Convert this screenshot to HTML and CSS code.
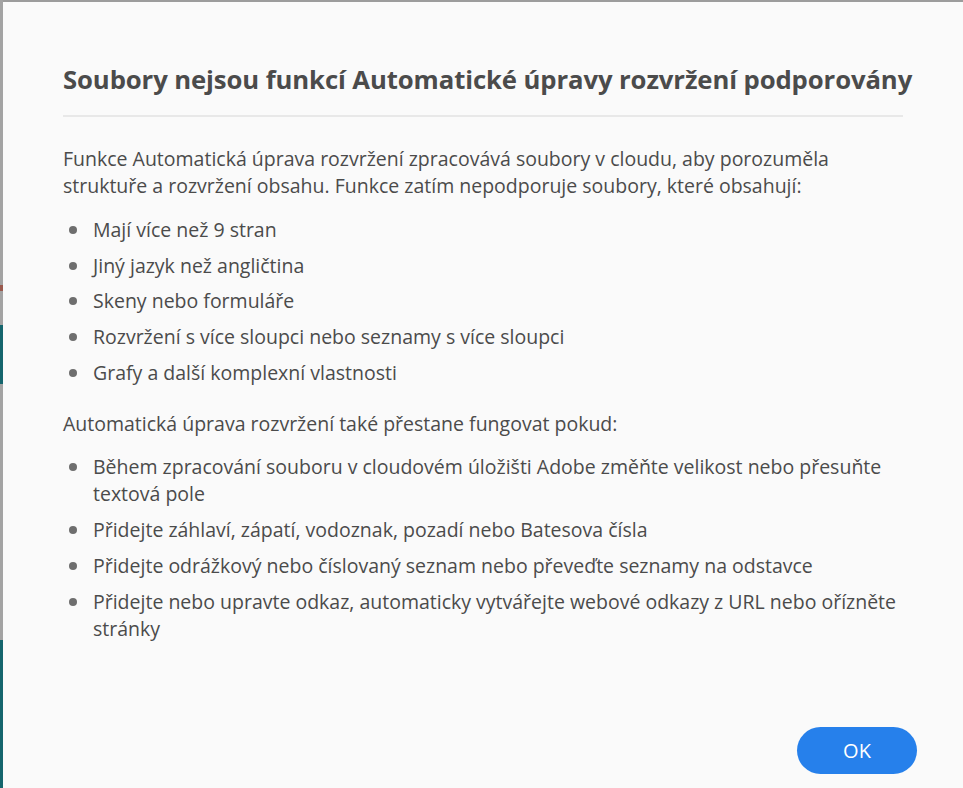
FILE: index.html
```html
<!DOCTYPE html>
<html lang="cs">
<head>
<meta charset="utf-8">
<title>Soubory nejsou podporovány</title>
<link rel="stylesheet" href="styles.css">
</head>
<body>
<div class="page">
  <div class="backdrop-strip">
    <div class="seg seg-gray seg-a"></div>
    <div class="seg seg-red"></div>
    <div class="seg seg-gray seg-b"></div>
    <div class="seg seg-teal seg-c"></div>
    <div class="seg seg-gray seg-d"></div>
    <div class="seg seg-teal seg-e"></div>
  </div>
  <div class="dialog">
    <h1 class="title">Soubory nejsou funkcí Automatické úpravy rozvržení podporovány</h1>
    <div class="divider"></div>
    <p class="para">Funkce Automatická úprava rozvržení zpracovává soubory v cloudu, aby porozuměla struktuře a rozvržení obsahu. Funkce zatím nepodporuje soubory, které obsahují:</p>
    <ul class="list">
      <li>Mají více než 9 stran</li>
      <li>Jiný jazyk než angličtina</li>
      <li>Skeny nebo formuláře</li>
      <li>Rozvržení s více sloupci nebo seznamy s více sloupci</li>
      <li>Grafy a další komplexní vlastnosti</li>
    </ul>
    <p class="para para-second">Automatická úprava rozvržení také přestane fungovat pokud:</p>
    <ul class="list list-second">
      <li>Během zpracování souboru v cloudovém úložišti Adobe změňte velikost nebo přesuňte textová pole</li>
      <li>Přidejte záhlaví, zápatí, vodoznak, pozadí nebo Batesova čísla</li>
      <li>Přidejte odrážkový nebo číslovaný seznam nebo převeďte seznamy na odstavce</li>
      <li>Přidejte nebo upravte odkaz, automaticky vytvářejte webové odkazy z URL nebo ořízněte stránky</li>
    </ul>
    <div class="footer">
      <button class="ok-btn" type="button">OK</button>
    </div>
  </div>
</div>
</body>
</html>
```
FILE: styles.css
```css
html, body {
  margin: 0;
  padding: 0;
  height: 100%;
}
body {
  background: #9c9c9c;
  font-family: "Open Sans", "Noto Sans", sans-serif;
  overflow: hidden;
}
.page {
  display: flex;
  height: 788px;
}
.backdrop-strip {
  width: 3px;
  display: flex;
  flex-direction: column;
  flex: none;
}
.seg { width: 100%; }
.seg-gray { background: #a3a3a3; }
.seg-a { height: 285px; }
.seg-red { height: 6px; background: #9a5a4e; }
.seg-b { height: 34px; }
.seg-c { height: 59px; }
.seg-d { height: 256px; }
.seg-teal { background: #15656d; }
.seg-e { flex: 1; }
.dialog {
  flex: 1;
  min-width: 0;
  margin-top: 2px;
  background: #fafafa;
  padding: 0 60px 0 60px;
  display: flex;
  flex-direction: column;
  color: #4b4b4b;
}
.title {
  margin: 62px 0 0 0;
  font-size: 25.7px;
  font-weight: 700;
  line-height: 32px;
  color: #4b4b4b;
  letter-spacing: -0.1px;
  white-space: nowrap;
}
.divider {
  margin-top: 19px;
  height: 2px;
  width: 840px;
  background: #e8e8e8;
}
.para {
  margin: 28px 0 0 0;
  font-size: 19.5px;
  line-height: 27px;
  color: #4b4b4b;
}
.para-second {
  margin-top: 24px;
}
.list {
  list-style: none;
  margin: 17px 0 0 0;
  padding: 0;
  display: flex;
  flex-direction: column;
  gap: 8.7px;
  font-size: 19.5px;
  line-height: 27px;
  color: #4b4b4b;
}
.list-second {
  margin-top: 16px;
  gap: 9px;
}
.list li {
  position: relative;
  padding-left: 30px;
}
.list li::before {
  content: "";
  position: absolute;
  left: 6px;
  top: 10px;
  width: 8px;
  height: 8px;
  border-radius: 50%;
  background: #6e6e6e;
}
.footer {
  margin-top: auto;
  display: flex;
  justify-content: flex-end;
  padding-bottom: 14px;
}
.ok-btn {
  width: 120px;
  height: 47px;
  border: none;
  border-radius: 24px;
  background: #2680eb;
  color: #ffffff;
  font-family: "Open Sans", "Noto Sans", sans-serif;
  font-size: 20px;
  font-weight: 400;
  margin-right: -14px;
  cursor: pointer;
}
```
